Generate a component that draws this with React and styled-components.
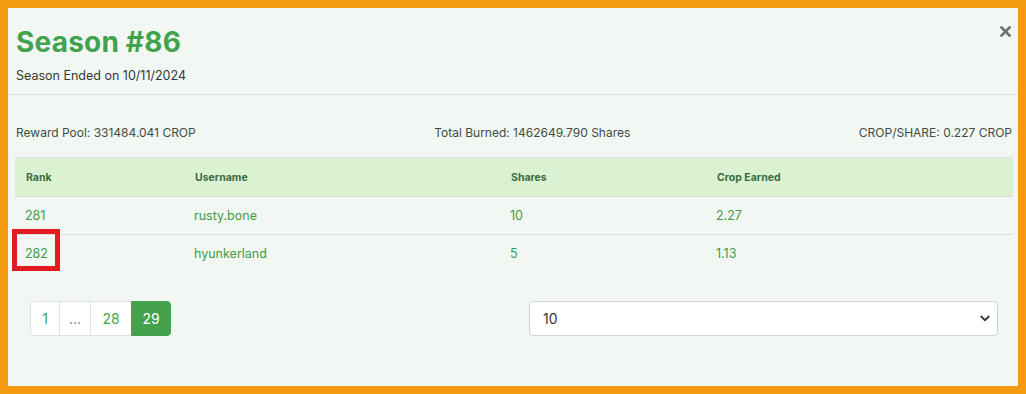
import React from 'react'
import styled, { createGlobalStyle } from 'styled-components'

const GlobalStyle = createGlobalStyle`
    html, body {
        margin: 0;
        padding: 0;
        background: #f59b11;
    }
    body {
        font-family: 'Inter', 'Liberation Sans', sans-serif;
    }
    * {
        box-sizing: border-box;
    }
`

const Frame = styled.div`
    width: 1026px;
    height: 394px;
    border: 8px solid #f59b11;
    background: #f2f7f3;
    position: relative;
    display: flex;
    flex-direction: column;
`
const Header = styled.header`
    position: relative;
    height: 87px;
    padding: 17px 8px 0;
    border-bottom: 1px solid #dde2e8;
    .title {
        margin: 0;
        font-size: 28px;
        font-weight: 700;
        color: #43a34d;
        line-height: 34px;
        letter-spacing: 0.2px;
    }
    .subtitle {
        margin: 9px 0 0;
        font-size: 12.5px;
        color: #333a35;
    }
`
const CloseBtn = styled.button`
    position: absolute;
    top: 15px;
    right: 5px;
    width: 16px;
    height: 16px;
    padding: 0;
    border: 0;
    background: none;
    cursor: pointer;
    display: flex;
    align-items: center;
    justify-content: center;
`
const Body = styled.section`
    padding: 0 5px 0 7px;
`
const Stats = styled.div`
    display: flex;
    justify-content: space-between;
    align-items: center;
    padding: 30px 1px 17px 1px;
    line-height: 15px;
    font-size: 12px;
    color: #3f4d42;
    span:nth-child(2) {
        margin-left: 10px;
    }
`
const Table = styled.table`
    width: 998px;
    border-collapse: collapse;
    table-layout: fixed;
    th {
        background: #daf2d2;
        color: #3a6b3f;
        font-size: 10.5px;
        font-weight: 700;
        text-align: left;
        height: 39px;
        padding: 0 0 0 11px;
        border-top: 1px solid #dfe5e1;
        border-bottom: 1px solid #d6dcd8;
    }
    td {
        color: #3f9c47;
        font-size: 12.5px;
        height: 38px;
        padding: 0 0 0 10px;
    }
    tr + tr td {
        border-top: 1px solid #d9dfdb;
    }
`
const Footer = styled.div`
    display: grid;
    grid-template-columns: 1fr 1fr;
    padding: 28px 5px 0 7px;
`
const Cell = styled.div`
    padding: 0 15px;
`
const Pagination = styled.ul`
    display: flex;
    list-style: none;
    margin: 0;
    padding: 0;
`
const PageItem = styled.li`
    height: 35px;
    min-width: ${p => p.$w}px;
    display: flex;
    align-items: center;
    justify-content: center;
    font-size: 14px;
    color: ${p => p.$active ? '#fff' : p.$muted ? '#6c7d70' : '#43a34d'};
    background: ${p => p.$active ? '#43a34d' : '#fff'};
    border: 1px solid ${p => p.$active ? '#43a34d' : '#dde2e8'};
    margin-left: -1px;
    &:first-child {
        margin-left: 0;
        border-radius: 4px 0 0 4px;
    }
    &:last-child {
        border-radius: 0 4px 4px 0;
    }
`
const Select = styled.div`
    height: 35px;
    background: #fff;
    border: 1px solid #ced4da;
    border-radius: 4px;
    display: flex;
    align-items: center;
    justify-content: space-between;
    padding: 0 6px 0 13px;
    font-size: 14px;
    color: #333;
`
const Highlight = styled.div`
    position: absolute;
    left: 4px;
    top: 221px;
    width: 48px;
    height: 42px;
    border: 5px solid #e21b23;
`

const rows = [
    { rank: 281, user: 'rusty.bone', shares: 10, earned: '2.27' },
    { rank: 282, user: 'hyunkerland', shares: 5, earned: '1.13' },
]

const App = () => {
    return (
        <>
            <GlobalStyle />
            <Frame>
                <Header>
                    <h1 className="title">Season #86</h1>
                    <p className="subtitle">Season Ended on 10/11/2024</p>
                    <CloseBtn aria-label="close">
                        <svg width="11" height="11" viewBox="0 0 11 11">
                            <path d="M1.5 1.5 L9.5 9.5 M9.5 1.5 L1.5 9.5" stroke="#6f6f6f" strokeWidth="2.6" strokeLinecap="square" />
                        </svg>
                    </CloseBtn>
                </Header>
                <Body>
                    <Stats>
                        <span>Reward Pool: 331484.041 CROP</span>
                        <span>Total Burned: 1462649.790 Shares</span>
                        <span>CROP/SHARE: 0.227 CROP</span>
                    </Stats>
                    <Table>
                        <colgroup>
                            <col style={{ width: 169 }} />
                            <col style={{ width: 316 }} />
                            <col style={{ width: 206 }} />
                            <col />
                        </colgroup>
                        <thead>
                            <tr>
                                <th>Rank</th>
                                <th>Username</th>
                                <th>Shares</th>
                                <th>Crop Earned</th>
                            </tr>
                        </thead>
                        <tbody>
                            {rows.map(r => (
                                <tr key={r.rank}>
                                    <td>{r.rank}</td>
                                    <td>{r.user}</td>
                                    <td>{r.shares}</td>
                                    <td>{r.earned}</td>
                                </tr>
                            ))}
                        </tbody>
                    </Table>
                </Body>
                <Footer>
                    <Cell>
                        <Pagination>
                            <PageItem $w={30}>1</PageItem>
                            <PageItem $w={32} $muted>…</PageItem>
                            <PageItem $w={42}>28</PageItem>
                            <PageItem $w={40} $active>29</PageItem>
                        </Pagination>
                    </Cell>
                    <Cell>
                        <Select>
                            <span>10</span>
                            <svg width="12" height="12" viewBox="0 0 16 16">
                                <path d="M3 6 L8 11 L13 6" fill="none" stroke="#343a40" strokeWidth="2.4" strokeLinecap="round" strokeLinejoin="round" />
                            </svg>
                        </Select>
                    </Cell>
                </Footer>
                <Highlight />
            </Frame>
        </>
    )
}

export default App
